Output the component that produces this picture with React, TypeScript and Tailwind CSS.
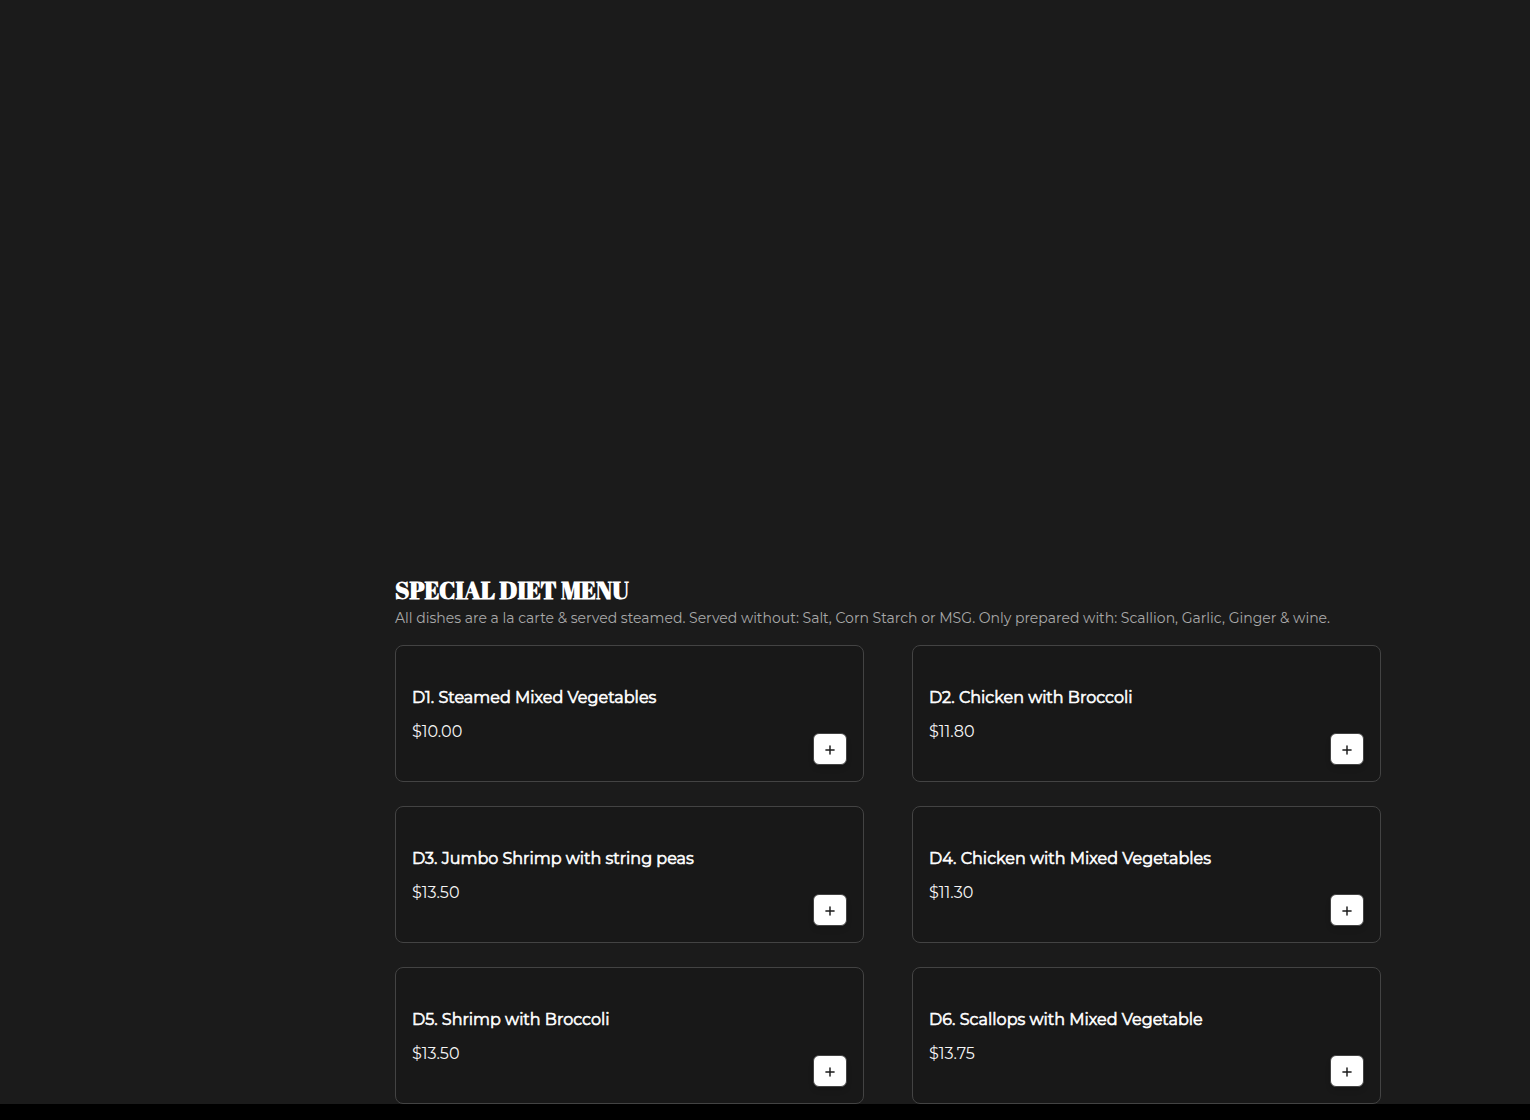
import { Plus } from 'lucide-react';

type Dish = {
  name: string;
  price: string;
};

const dishes: Dish[] = [
  { name: 'D1. Steamed Mixed Vegetables', price: '$10.00' },
  { name: 'D2. Chicken with Broccoli', price: '$11.80' },
  { name: 'D3. Jumbo Shrimp with string peas', price: '$13.50' },
  { name: 'D4. Chicken with Mixed Vegetables', price: '$11.30' },
  { name: 'D5. Shrimp with Broccoli', price: '$13.50' },
  { name: 'D6. Scallops with Mixed Vegetable', price: '$13.75' },
];

export default function App() {
  return (
    <div className="h-[1120px] overflow-hidden bg-black font-['Montserrat','Inter',sans-serif]">
      <main className="h-[1104px] bg-[#1b1b1b] pl-[395px] pt-[574px]">
        <section className="w-[986px]">
          <h2 className="h-8 whitespace-nowrap font-['Abril_Fatface','Liberation_Serif',serif] text-2xl font-bold leading-8 text-white">
            SPECIAL DIET MENU
          </h2>
          <p className="mt-[2px] h-5 whitespace-nowrap text-sm text-[#a9a9a9]">
            All dishes are a la carte &amp; served steamed. Served without: Salt, Corn Starch or MSG. Only prepared with: Scallion, Garlic, Ginger &amp; wine.
          </p>
          <div className="mt-[17px] grid grid-cols-2 gap-x-12 gap-y-6">
            {dishes.map((dish) => (
              <DishCard key={dish.name} dish={dish} />
            ))}
          </div>
        </section>
      </main>
    </div>
  );
}

function DishCard({ dish }: { dish: Dish }) {
  return (
    <article className="flex h-[137px] items-end justify-between rounded-lg border border-[#434343] bg-[#181818] p-4">
      <div className="flex h-full flex-col justify-center gap-2.5 whitespace-nowrap pt-[3px]">
        <h3 className="text-base text-white [-webkit-text-stroke:0.6px_white]">{dish.name}</h3>
        <p className="text-base text-[#f5f5f5]">{dish.price}</p>
      </div>
      <button
        type="button"
        aria-label={`Add ${dish.name}`}
        className="flex h-8 w-[34px] items-center justify-center rounded-md border border-[#434343] bg-white pt-0.5 text-[#1b1b1b] shadow-md"
      >
        <Plus className="size-3.5" strokeWidth={2.5} />
      </button>
    </article>
  );
}
